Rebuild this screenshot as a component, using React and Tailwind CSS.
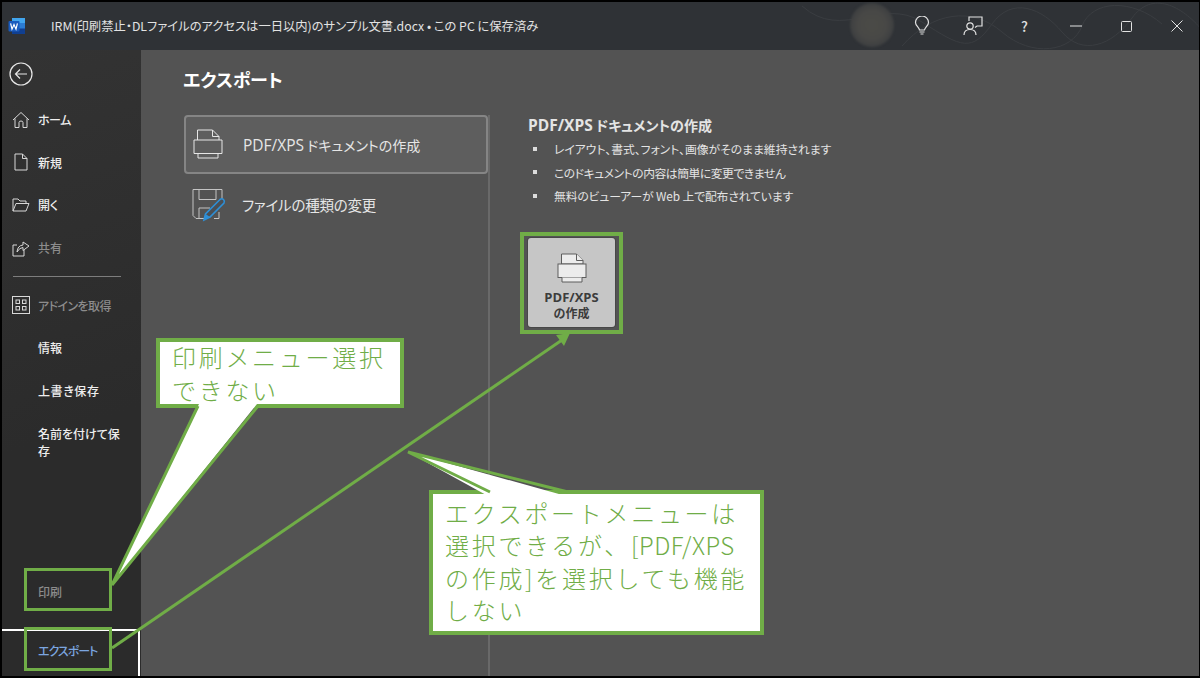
const JP = "font-['Noto_Sans_CJK_JP','Noto_Sans',sans-serif]";
const LATIN = "font-['Open_Sans','Noto_Sans',sans-serif]";

function WordLogo() {
  return (
    <svg width="18" height="18" viewBox="0 0 18 18">
      <rect x="4" y="1" width="13" height="16" rx="1" fill="#2b7cd3" />
      <rect x="4" y="1" width="13" height="5" fill="#41a5ee" />
      <rect x="4" y="11.5" width="13" height="5.5" fill="#103f91" />
      <rect x="0.5" y="4" width="11" height="10.5" rx="1" fill="#185abd" />
      <path d="M2.6 6.3 L4 12.2 L6 7.6 L8 12.2 L9.4 6.3" fill="none" stroke="#fff" strokeWidth="1.2" />
    </svg>
  );
}

const s = { fill: "none", stroke: "currentColor", strokeWidth: 1 };

const Icons = {
  back: (
    <svg width="24" height="24" viewBox="0 0 24 24" {...s} strokeWidth="1.2">
      <circle cx="12" cy="12" r="11" />
      <path d="M18 12H6.5M11 7.5 6.5 12l4.500 4.500" />
    </svg>
  ),
  home: (
    <svg width="18" height="18" viewBox="0 0 18 18" {...s}>
      <path d="M1 9 9 1.500 17 9M3 7.500V16.500H7V11.500Q7 10 9 10T11 11.500V16.500H15V7.500" />
    </svg>
  ),
  doc: (
    <svg width="14" height="18" viewBox="0 0 14 18" {...s}>
      <path d="M1 1H8.500L13 5.500V17H1ZM8.500 1V5.500H13" />
    </svg>
  ),
  open: (
    <svg width="18" height="14" viewBox="0 0 18 14" {...s}>
      <path d="M1 13V1H6L8 3H14V5.500M1 13 4 5.500H17L14 13Z" />
    </svg>
  ),
  share: (
    <svg width="18" height="18" viewBox="0 0 18 18" {...s}>
      <path d="M5 6H1V17H12V11M5 13Q5.500 6.500 11 6V3L17 7 11 11.500V8.500Q7.500 8.500 5 13Z" />
    </svg>
  ),
  addin: (
    <svg width="18" height="18" viewBox="0 0 18 18" {...s}>
      <rect x="0.500" y="0.500" width="17" height="17" />
      <rect x="4" y="4" width="3.500" height="3.500" />
      <rect x="10.500" y="4" width="3.500" height="3.500" />
      <rect x="4" y="10.500" width="3.500" height="3.500" />
      <rect x="10.500" y="10.500" width="3.500" height="3.500" />
    </svg>
  ),
  printer: (
    <svg width="30" height="31" viewBox="0 0 30 31" {...s}>
      <path d="M4.500 11V1H19.500L26 7.500V11M19.500 1V7.500H26M1 11H29V24.500H1ZM5 24.500V29H25V24.500" />
    </svg>
  ),
  save: (
    <svg width="34" height="34" viewBox="0 0 34 34">
      <path d="M15 30.500H4L1 27.500V1.500H30V12M7 1.500V11.500H24V1.500M7 30.500V20H18M27 24V30.500H22" fill="none" stroke="#c4c4c4" strokeWidth="1" />
      <path d="M12 32 13.500 26 28 11.500Q30 10 31.500 11.500T32 15L18 29Z" fill="#4a4f55" stroke="#2e8fd6" strokeWidth="1.600" />
      <path d="M12 32 13.500 26 18 29Z" fill="#2e8fd6" />
    </svg>
  ),
  bigPrinter: (
    <svg width="30" height="31" viewBox="0 0 30 31">
      <path d="M4.500 11V1H19.500L26 7.500V11Z" fill="#ececec" stroke="#5d5d5d" />
      <path d="M19.500 1V7.500H26" fill="#ececec" stroke="#5d5d5d" />
      <rect x="1" y="11" width="28" height="13.500" fill="#ececec" stroke="#5d5d5d" />
      <path d="M5 24.500V29H25V24.500" fill="#ececec" stroke="#5d5d5d" />
    </svg>
  ),
};

function Item({ icon, label, dim, className = "", labelClass = "" }) {
  return (
    <div className={`flex h-[42.6px] items-center ${dim ? "text-[#8c8c8c]" : "text-[#eeeeee]"} ${className}`}>
      <span className="flex w-[36px] shrink-0 justify-center pl-[2px] text-[#d8d8d8]">{icon}</span>
      <span className={`w-[90px] text-[12px] leading-[17px] font-medium [font-feature-settings:'palt'] ${labelClass}`}>{label}</span>
    </div>
  );
}

function TitleBar() {
  return (
    <header className="relative flex h-[48px] shrink-0 items-center overflow-hidden bg-[#2f3236] text-[#e2e2e2]">
      <svg className="absolute top-0 left-[780px]" width="420" height="48" fill="none" stroke="#3a3d41" strokeWidth="1">
        <path d="M20 4C60 40 100 -6 140 20S190 50 210 22 260 6 280 30 330 44 350 16 400 4 420 28" />
        <path d="M120 44C150 10 190 4 220 30S290 50 300 24 350 -4 380 22" />
      </svg>
      <div className="absolute top-[1px] left-[848px] h-[44px] w-[44px] rounded-full bg-[radial-gradient(circle,#4b4b47_0%,#484846_45%,#3c3e40_75%,#2f3236_100%)] blur-[1px]" />
      <span className="relative ml-[6px]"><WordLogo /></span>
      <span className="relative ml-[25px] text-[12.300px] whitespace-nowrap [font-feature-settings:'palt']">
        IRM(印刷禁止・DLファイルのアクセスは一日以内)のサンプル文書.docx • この PC に保存済み
      </span>
      <div className="relative ml-auto flex h-full items-center">
        <svg className="mr-[33px]" width="16" height="20" viewBox="0 0 16 20" {...s} strokeWidth="1.200">
          <path d="M5.500 14C5 11 1.500 10 1.500 6.500A6.500 6.500 0 0 1 14.500 6.500C14.500 10 11 11 10.500 14ZM5.500 16H10.500M6.500 18H9.500" />
        </svg>
        <svg className="mr-[38px]" width="20" height="20" viewBox="0 0 20 20" {...s} strokeWidth="1.200">
          <path d="M6 5V1H19V10H14L12 11.500M10 7.500" />
          <circle cx="7" cy="10" r="3.200" />
          <path d="M1 19C1 15 4 13.500 7 13.500S13 15 13 19" />
        </svg>
        <span className="mr-[42px] text-[14px] font-medium">?</span>
        <svg className="mr-[39px]" width="12" height="2" viewBox="0 0 12 2"><path d="M0 1H12" stroke="currentColor" /></svg>
        <svg className="mr-[39px]" width="11" height="11" viewBox="0 0 11 11" {...s}><rect x="0.500" y="0.500" width="10" height="10" rx="1" /></svg>
        <svg className="mr-[16px]" width="12" height="12" viewBox="0 0 12 12" {...s}><path d="M0.500 0.500 11.500 11.500M11.500 0.500 0.500 11.500" /></svg>
      </div>
    </header>
  );
}

function Sidebar() {
  return (
    <aside className="flex w-[139px] shrink-0 flex-col bg-[linear-gradient(160deg,#333333,#2b2b2b_60%)]">
      <div className="mt-[12px] mb-[12.500px] ml-[7px] text-[#e8e8e8]">{Icons.back}</div>
      <Item icon={Icons.home} label="ホーム" labelClass="tracking-[-0.500px]" />
      <Item icon={Icons.doc} label="新規" />
      <Item icon={Icons.open} label="開く" />
      <Item icon={Icons.share} label="共有" dim />
      <div className="my-[7px] mr-[20px] ml-[11px] h-px bg-[#7d7d7d]" />
      <Item icon={Icons.addin} label="アドインを取得" dim labelClass="tracking-[-0.600px]" />
      <Item label="情報" />
      <Item label="上書き保存" labelClass="tracking-[0.600px]" />
      <Item label="名前を付けて保存" className="mt-[9px]" />
      <Item label="印刷" dim className="mt-auto mb-[16px]" />
      <div className="mr-[1px] flex h-[47px] items-center border-t-2 border-r-2 border-white pb-[5px] text-[#7ba6e0]">
        <span className="w-[36px] shrink-0" />
        <span className="text-[12px] font-medium tracking-[-1px] [font-feature-settings:'palt']">エクスポート</span>
      </div>
    </aside>
  );
}

function Main() {
  return (
    <main className="flex min-w-0 flex-1 flex-col bg-[#535353] pl-[42px]">
      <h1 className="mt-[16px] h-[49px] text-[18px] leading-[26px] font-bold text-white [font-feature-settings:'palt']">エクスポート</h1>
      <div className="flex flex-1">
        <div className="w-[307px] shrink-0 border-r-2 border-[#696969]">
          <div className="ml-[1px] flex h-[59px] items-center rounded-[4px] border-2 border-[#858585] bg-[#5e5e5e] pl-[7px] text-[#e6e6e6]">
            {Icons.printer}
            <span className="ml-[20px] text-[14px] leading-[20px] [font-feature-settings:'palt']">
              <span className={`${LATIN} text-[15.500px]`}>PDF/XPS</span> ドキュメントの作成
            </span>
          </div>
          <div className="mt-[10px] flex h-[42px] items-center pl-[9px] text-[#e6e6e6]">
            {Icons.save}
            <span className="ml-[16px] text-[14.500px] tracking-[-0.200px] [font-feature-settings:'palt']">ファイルの種類の変更</span>
          </div>
        </div>
        <div className="ml-[38px] flex flex-col text-[#e4e4e4]">
          <h2 className="h-[25px] text-[14px] leading-[20px] font-bold [font-feature-settings:'palt']">
            <span className={`${LATIN} text-[15.500px]`}>PDF/XPS</span> ドキュメントの作成
          </h2>
          <ul className="flex flex-col gap-[6px] text-[11.800px] leading-[17.500px] [font-feature-settings:'palt']">
            <li className="flex items-center">
              <span className="mr-[17px] ml-[5px] h-[4px] w-[4px] bg-[#dcdcdc]" />
              レイアウト、書式、フォント、画像がそのまま維持されます
            </li>
            <li className="flex items-center tracking-[-0.450px]">
              <span className="mr-[17px] ml-[5px] h-[4px] w-[4px] bg-[#dcdcdc]" />
              このドキュメントの内容は簡単に変更できません
            </li>
            <li className="flex items-center tracking-[-0.100px]">
              <span className="mr-[17px] ml-[5px] h-[4px] w-[4px] bg-[#dcdcdc]" />
              無料のビューアーが Web 上で配布されています
            </li>
          </ul>
          <div className="mt-[33px] flex h-[89px] w-[87px] flex-col items-center rounded-[3px] bg-[#c6c6c6] pt-[15px] text-[#3c3c3c] shadow-[0_0_0_1px_#474747]">
            {Icons.bigPrinter}
            <span className="mt-[5px] text-center text-[12px] leading-[15.500px] font-bold [font-feature-settings:'palt']">
              <span className={`${LATIN} text-[13px]`}>PDF/XPS</span><br />の作成
            </span>
          </div>
        </div>
      </div>
    </main>
  );
}

function Annotations() {
  return (
    <>
      <div className="absolute top-[568px] left-[24px] h-[43px] w-[88px] border-[3px] border-[#70ad47]" />
      <div className="absolute top-[627px] left-[24px] h-[44px] w-[88px] border-[3px] border-[#70ad47]" />
      <div className="absolute top-[232px] left-[520px] h-[102px] w-[103px] border-[4px] border-[#70ad47]" />
      <div className="absolute top-[338px] left-[156px] h-[70px] w-[248px] border-[4px] border-[#70ad47] bg-white pl-[12px] text-[24px] leading-[33px] tracking-[2.700px] font-light text-[#70ad47]">
        <div className="-mt-[2px]">印刷メニュー選択<br />できない</div>
      </div>
      <div className="absolute top-[490px] left-[429px] h-[145px] w-[335px] border-[4px] border-[#70ad47] bg-white pt-[2.500px] pl-[12px] text-[24px] leading-[32.500px] tracking-[2.700px] font-light text-[#70ad47]">
        エクスポートメニューは<br />選択できるが、<span className="tracking-[0.500px]">[PDF/XPS</span><br />の作成]を選択しても機能<br />しない
      </div>
      <svg className="absolute inset-0" width="1200" height="678" fill="none">
        <path d="M199 404 112 585 257 404Z" fill="#fff" />
        <path d="M198 406 112 585 258 406" stroke="#70ad47" strokeWidth="3" />
        <path d="M488 496 408 452 566 496Z" fill="#fff" />
        <path d="M490 492 408 452 568 492" stroke="#70ad47" strokeWidth="3" />
        <path d="M112 648 562 340" stroke="#70ad47" strokeWidth="3" />
        <path d="M570 333 556 335 564 346Z" fill="#70ad47" />
      </svg>
    </>
  );
}

export default function App() {
  return (
    <div className={`relative h-[678px] w-[1200px] overflow-hidden bg-black ${JP}`}>
      <div className="flex h-full flex-col pt-[2px] pr-[1px] pb-[2px] pl-[2px]">
        <TitleBar />
        <div className="flex min-h-0 flex-1">
          <Sidebar />
          <Main />
        </div>
      </div>
      <Annotations />
    </div>
  );
}
